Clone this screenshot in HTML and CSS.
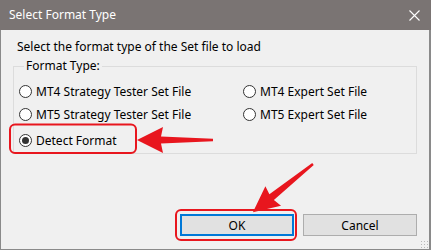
FILE: index.html
```html
<!DOCTYPE html>
<html>
<head>
<meta charset="utf-8">
<link rel="stylesheet" href="styles.css">
</head>
<body>
<div class="window">
  <div class="titlebar">
    <span class="title">Select Format Type</span>
    <svg class="close" width="11" height="11" viewBox="0 0 11 11"><path d="M0.5 0.5 L10.5 10.5 M10.5 0.5 L0.5 10.5" stroke="#fff" stroke-width="1.1" fill="none"/></svg>
  </div>
  <div class="content">
    <p class="prompt">Select the format type of the Set file to load</p>
    <fieldset class="group">
      <legend class="legend">Format Type:</legend>
      <div class="options">
        <div class="radio"><span class="dot"></span><span>MT4 Strategy Tester Set File</span></div>
        <div class="radio"><span class="dot"></span><span>MT4 Expert Set File</span></div>
        <div class="radio"><span class="dot"></span><span>MT5 Strategy Tester Set File</span></div>
        <div class="radio"><span class="dot"></span><span>MT5 Expert Set File</span></div>
        <div class="radio detect"><span class="dot checked"></span><span>Detect Format</span></div>
      </div>
    </fieldset>
    <div class="buttons">
      <button class="btn default">OK</button>
      <button class="btn">Cancel</button>
    </div>
  </div>
  <svg class="annotations" width="431" height="251" viewBox="0 0 431 251">
    <g fill="none" stroke="#e8161e" stroke-width="2">
      <rect x="10" y="124.5" width="126" height="28.5" rx="5"/>
      <rect x="176" y="210" width="120" height="30" rx="5"/>
    </g>
    <g fill="#e8161e">
      <path transform="translate(213 140) rotate(180)" d="M0 -1.2 L52 -3.6 L50 -13 L76 0 L50 13 L52 3.6 L0 1.2 Z"/>
      <path transform="translate(313 164) rotate(141.3)" d="M0 -1.2 L53 -3.6 L51 -12.5 L77 0 L51 12.5 L53 3.6 L0 1.2 Z"/>
    </g>
  </svg>
  <div class="grip"></div>
</div>
</body>
</html>
```

FILE: styles.css
```css
html, body {
  margin: 0;
  padding: 0;
  background: #ffffff;
}

body {
  font-family: "Noto Sans", "Open Sans", sans-serif;
  font-size: 12px;
  color: #000;
}

.window {
  position: relative;
  width: 431px;
  height: 250px;
  box-sizing: border-box;
  background: #f0f0f0;
  border-left: 1px solid #8a8a8a;
  border-right: 2px solid #8a8a8a;
  border-bottom: 1px solid #8a8a8a;
  display: flex;
  flex-direction: column;
}

.titlebar {
  height: 30px;
  flex: none;
  background: #7a7473;
  color: #fff;
  display: flex;
  align-items: center;
  justify-content: space-between;
  padding: 0 10px 0 9px;
  margin-left: -1px;
  margin-right: -2px;
}

.title {
  font-size: 12px;
  line-height: 16px;
}

.close {
  display: block;
  margin-right: 1px;
}

.content {
  flex: 1;
  padding: 9px 12px 0 12px;
  display: flex;
  flex-direction: column;
}

.prompt {
  margin: 0 0 3px 4px;
  line-height: 16px;
}

.group {
  margin: 0;
  border: 1px solid #dcdcdc;
  padding: 7px 5px 3px 5px;
  min-width: 0;
}

.legend {
  padding: 0 2px;
  margin-left: 5px;
  line-height: 16px;
}

.options {
  display: grid;
  grid-template-columns: 224px 1fr;
  row-gap: 3px;
}

.radio {
  height: 20px;
  display: flex;
  align-items: center;
  gap: 4px;
  white-space: nowrap;
}

.detect {
  margin-top: 3px;
}

.dot {
  width: 13px;
  height: 13px;
  box-sizing: border-box;
  border: 1px solid #333;
  border-radius: 50%;
  background: #fff;
  display: flex;
  align-items: center;
  justify-content: center;
  flex: none;
}

.dot.checked::after {
  content: "";
  width: 7px;
  height: 7px;
  border-radius: 50%;
  background: #333;
}

.buttons {
  display: flex;
  justify-content: flex-end;
  gap: 9px;
  margin-top: 60px;
}

.btn {
  width: 114px;
  height: 22px;
  box-sizing: border-box;
  background: #e1e1e1;
  border: 1px solid #adadad;
  font-family: inherit;
  font-size: 12px;
  color: #000;
  padding: 0;
}

.btn.default {
  border: 2px solid #0078d7;
}

.annotations {
  position: absolute;
  left: -1px;
  top: 0;
  pointer-events: none;
}

.grip {
  position: absolute;
  right: 1px;
  bottom: 1px;
  width: 8px;
  height: 8px;
  background-image: radial-gradient(circle, #b8b8b8 0.8px, transparent 1px);
  background-size: 3px 3px;
}
```
